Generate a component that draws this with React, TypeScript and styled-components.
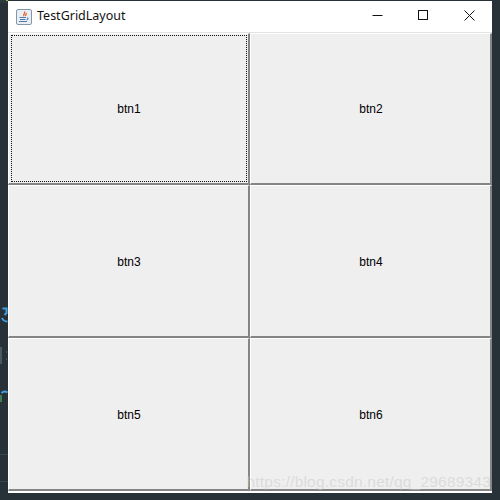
import React from 'react';
import styled, { createGlobalStyle } from 'styled-components';

const Global = createGlobalStyle`
  html, body { margin: 0; padding: 0; width: 500px; height: 500px; overflow: hidden; background: #263238; }
`;

const Desktop = styled.div`
  position: relative;
  display: flex;
  width: 500px;
  height: 500px;
  background: #263238;
  font-family: "Liberation Sans", Arial, sans-serif;
`;
const Gutter = styled.svg`
  width: 8px;
  height: 500px;
  flex: none;
  display: block;
`;
const Win = styled.div`
  width: 484px;
  height: 492px;
  margin-top: 1px;
  display: flex;
  flex-direction: column;
  background: #fff;
`;
const TitleBar = styled.div`
  height: 32px;
  flex: none;
  display: flex;
  align-items: center;
  background: #fff;
  border-bottom: 1px solid #e2e2e2;
  box-sizing: border-box;
`;
const AppIcon = styled.svg`
  width: 16px;
  height: 16px;
  margin-left: 8px;
  margin-right: 5px;
  flex: none;
`;
const Title = styled.div`
  flex: 1;
  font-family: "Noto Sans", "Open Sans", sans-serif;
  font-size: 12.5px;
  color: #111;
  padding-bottom: 2px;
`;
const WinBtn = styled.div`
  width: 46px;
  height: 31px;
  display: flex;
  align-items: center;
  justify-content: center;
  padding-bottom: 2px;
  box-sizing: border-box;
`;
const Grid = styled.div`
  flex: 1;
  display: grid;
  grid-template-columns: 242px 242px;
  grid-template-rows: 152px 153px 153px;
  background: #fff;
  padding-bottom: 2px;
`;
const Btn = styled.div`
  position: relative;
  display: flex;
  align-items: center;
  justify-content: center;
  box-sizing: border-box;
  background: #efefef;
  border-right: 2px solid #858585;
  border-bottom: 2px solid #858585;
  border-left: 1px solid #fff;
  border-top: 1px solid #fff;
  padding-left: 1px;
  padding-top: 1px;
  font-size: 12px;
  color: #000;
`;
const Focus = styled.div`
  position: absolute;
  inset: 1px 1px 1px 2px;
  border: 1px dotted #111;
`;
const Watermark = styled.div`
  position: absolute;
  right: 9px;
  bottom: 9px;
  font-size: 15.5px;
  letter-spacing: 0.2px;
  color: rgba(200, 200, 200, 0.5);
  white-space: pre;
`;

const names = ['btn1', 'btn2', 'btn3', 'btn4', 'btn5', 'btn6'];

export default function App() {
  return (
    <Desktop>
      <Global />
      <Gutter viewBox="0 0 8 500">
        <rect x="0" y="0" width="8" height="3" fill="#2b3a41" />
        <rect x="6" y="0" width="2" height="1" fill="#8fc54a" />
        <path d="M2.5 308.5h5M6.5 309v4l-2 2" stroke="#3f9fe8" strokeWidth="2" fill="none" />
        <path d="M2 318c1 2.5 3 3.5 5.5 3.5" stroke="#3f9fe8" strokeWidth="2" fill="none" />
        <rect x="0" y="347" width="2" height="17" fill="#4a5960" />
        <rect x="6" y="351" width="1" height="2" fill="#38586b" />
        <rect x="6" y="358" width="1" height="2" fill="#38586b" />
        <path d="M1.5 393c2-2 4-2 6-.5" stroke="#3f9fe8" strokeWidth="2" fill="none" />
        <path d="M1 395v7" stroke="#3f7f5a" strokeWidth="2" fill="none" />
        <path d="M0 454.5h8M0 481.5h8" stroke="#37464d" fill="none" />
      </Gutter>
      <Win>
        <TitleBar>
          <AppIcon viewBox="0 0 16 16">
            <rect x="0.5" y="0.5" width="15" height="15" rx="1.5" fill="#e8eef3" stroke="#8397a8" />
            <path d="M8.5 2.5c1.2 1.6-1.6 2.6-.6 4.6M10.2 4c.5 1-1 2-.5 3" fill="none" stroke="#e0662a" strokeWidth="1.3" />
            <path d="M3.5 8.5h6.5M4 10.5h5.5M11 8.8c1.5 0 1.5 1.8-.5 2M3 12.5h8" fill="none" stroke="#4d7ba6" strokeWidth="1.1" />
          </AppIcon>
          <Title>TestGridLayout</Title>
          <WinBtn>
            <svg width="11" height="11" viewBox="0 0 11 11"><path d="M0.5 5.5h10" stroke="#111" fill="none" /></svg>
          </WinBtn>
          <WinBtn>
            <svg width="11" height="11" viewBox="0 0 11 11"><rect x="0.5" y="0.5" width="9" height="9" stroke="#111" fill="none" /></svg>
          </WinBtn>
          <WinBtn>
            <svg width="11" height="11" viewBox="0 0 11 11"><path d="M0.5 0.5l10 10M10.5 0.5l-10 10" stroke="#111" fill="none" /></svg>
          </WinBtn>
        </TitleBar>
        <Grid>
          {names.map((n, i) => (
            <Btn key={n}>
              {i === 0 && <Focus />}
              {n}
            </Btn>
          ))}
        </Grid>
      </Win>
      <Watermark>https://blog.csdn.net/qq_29689343</Watermark>
    </Desktop>
  );
}
